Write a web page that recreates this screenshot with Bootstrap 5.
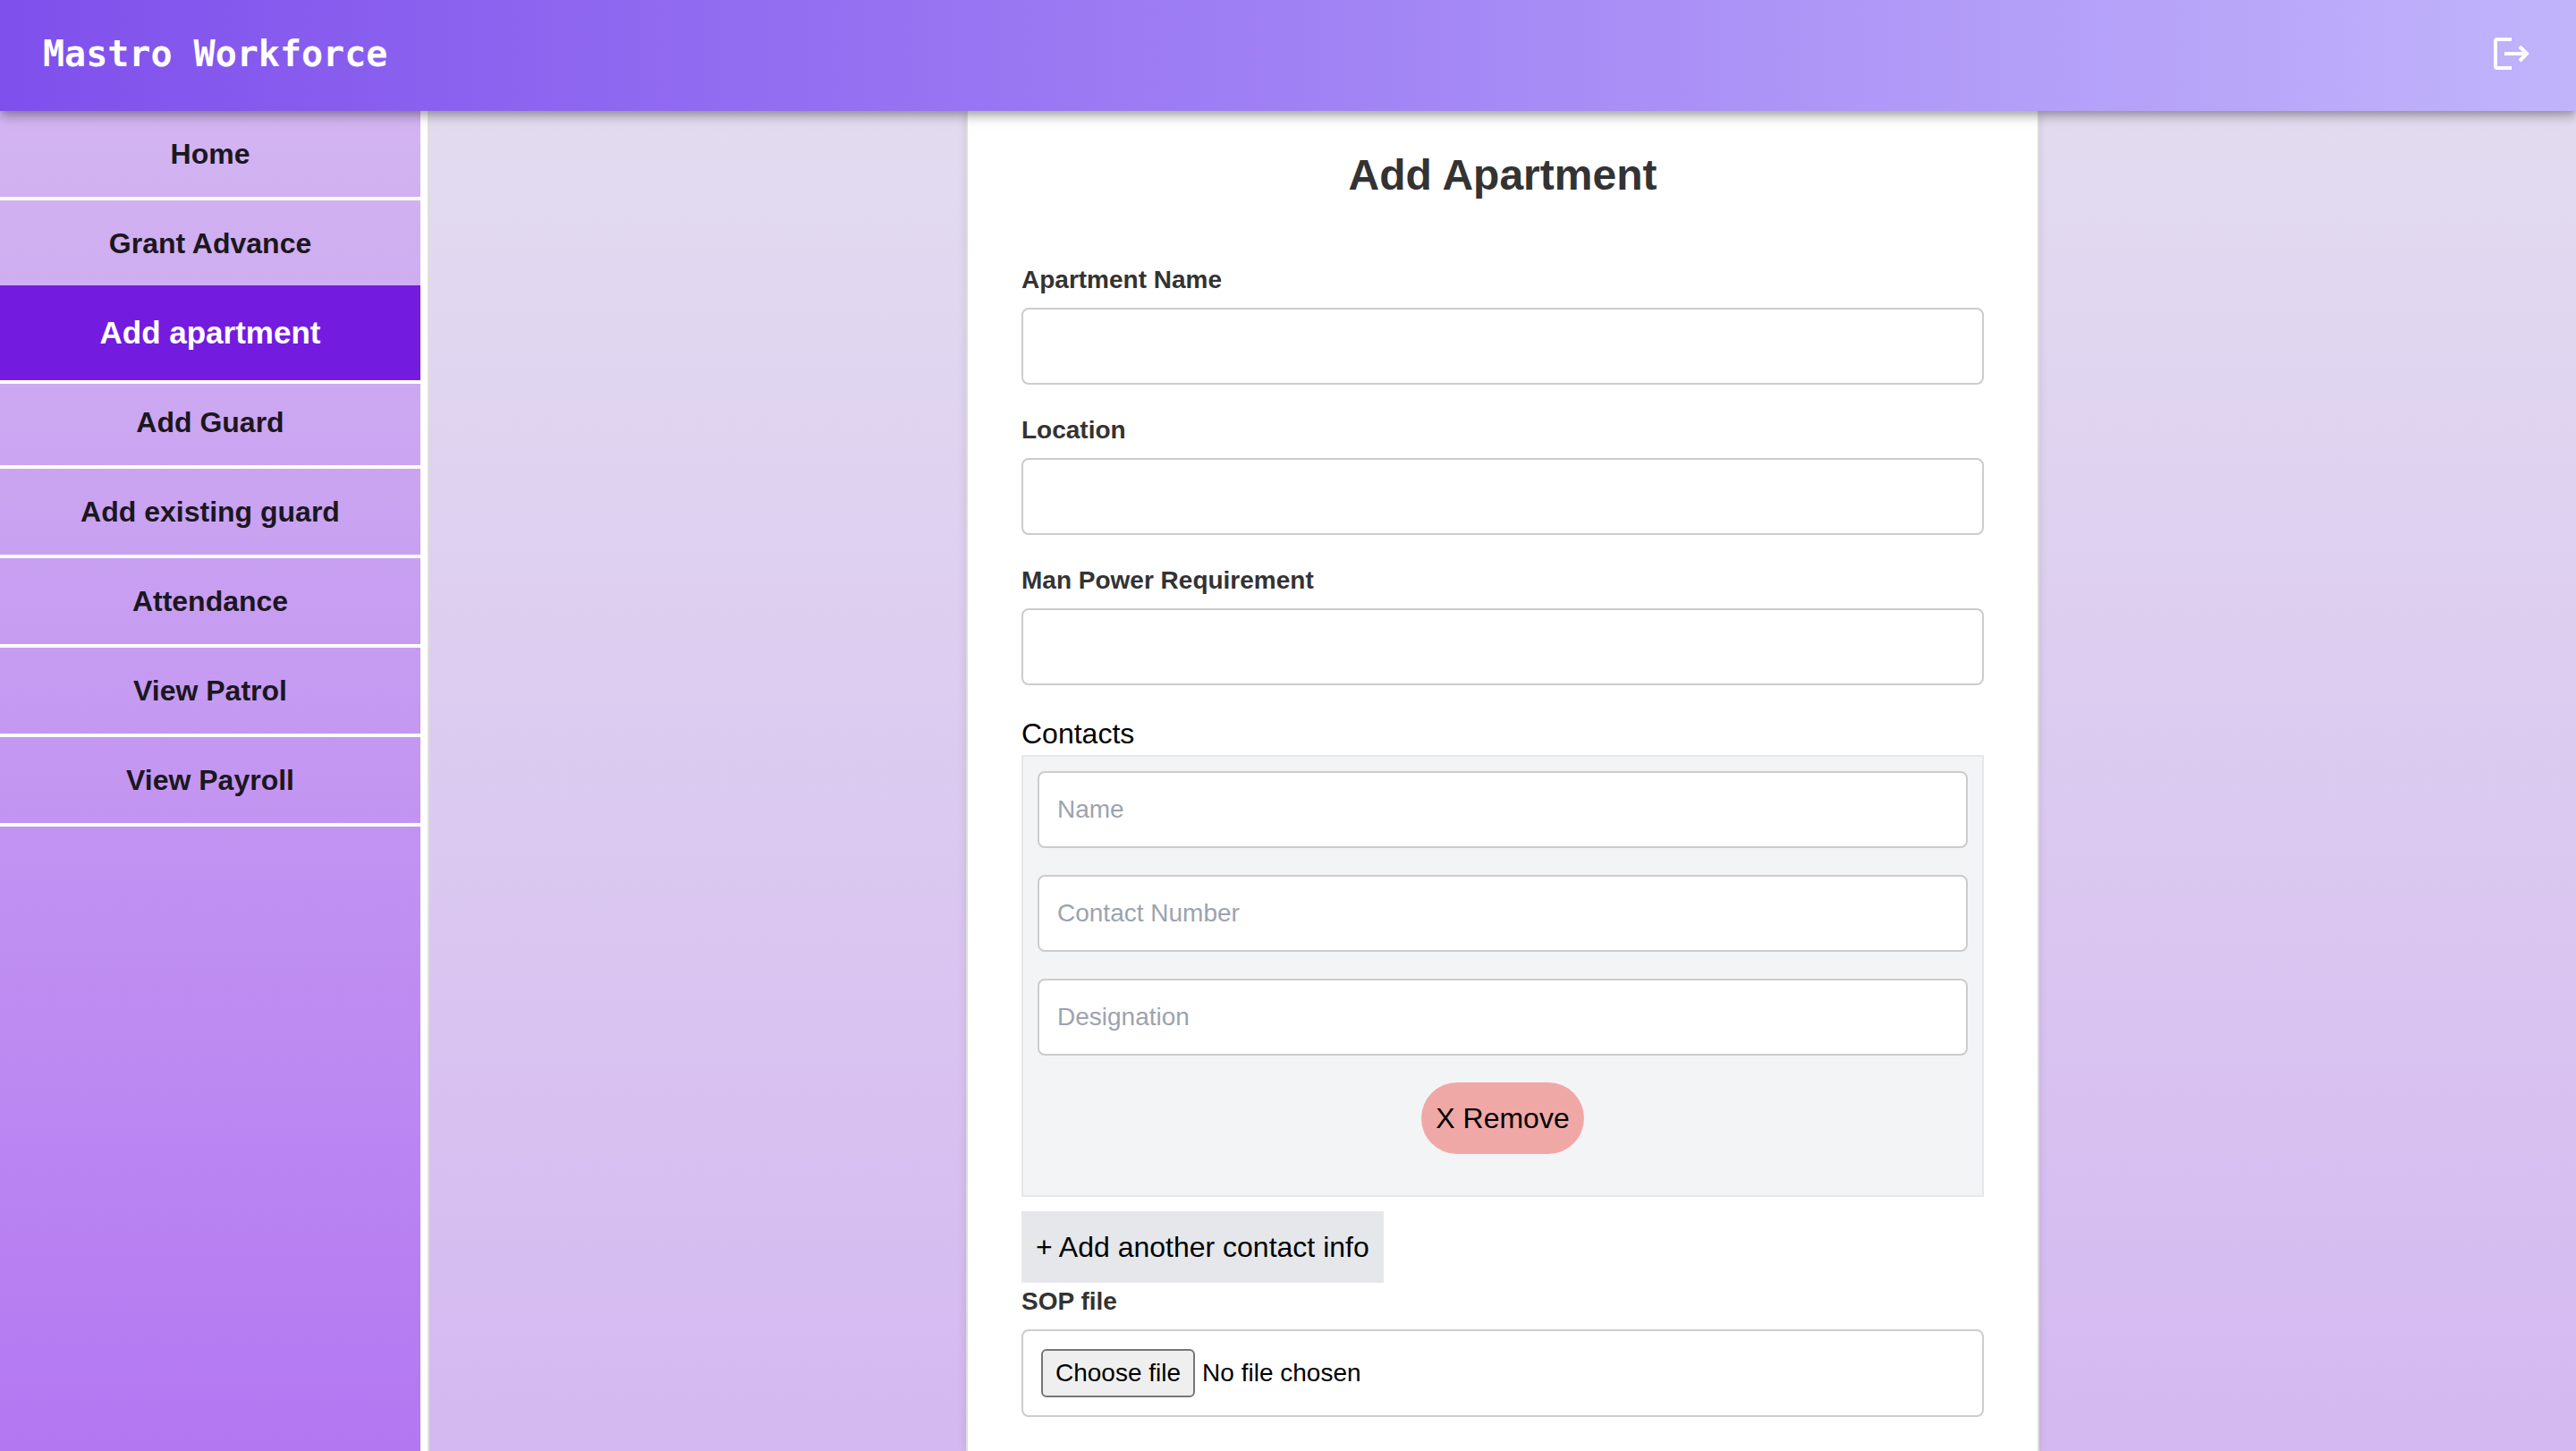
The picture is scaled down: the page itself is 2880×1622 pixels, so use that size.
<!DOCTYPE html>
<html lang="en">
<head>
<meta charset="utf-8">
<meta name="viewport" content="width=device-width, initial-scale=1">
<title>Mastro Workforce</title>
<link href="https://cdn.jsdelivr.net/npm/bootstrap@5.3.0/dist/css/bootstrap.min.css" rel="stylesheet">
<style>
  body {
    font-family: "Liberation Sans", Arial, Helvetica, sans-serif;
    font-size: 32px;
    line-height: 48px;
    color: #000;
    background: linear-gradient(180deg, #e4dff0, #d4b8f1);
  }
  .topbar {
    z-index: 10;
    padding: 36px 48px 40px;
    background: linear-gradient(90deg, #7f50ec, #a081f4 50%, #c1b4fb);
    box-shadow: 0 4px 8px -2px rgba(0,0,0,.2), 0 8px 10px 0 rgba(0,0,0,.14), 0 2px 20px 0 rgba(0,0,0,.12);
  }
  .brand-name {
    font: 700 40px/48px "DejaVu Sans Mono", monospace;
    color: #fff;
  }
  .logout-btn { width: 48px; height: 48px; }
  .side-col { border-right: 2px solid #e0e0e0; }
  .side-menu {
    border-right: 8px solid #fff;
    background: linear-gradient(180deg, #d3b5f1, #b377f2);
  }
  .side-link {
    padding: 24px 0;
    border-bottom: 4px solid #fff;
    font-weight: 700;
    color: #1b1720;
  }
  .side-link.active {
    z-index: 1;
    margin: -5px 0;
    padding: 26px 0;
    font-size: 35px;
    line-height: 54px;
    color: #fff;
    background: #731ce0;
  }
  .form-panel {
    padding: 36px 60px;
    border: solid #ddd;
    border-width: 0 2px;
    background: #fff;
    box-shadow: 0 0 10px rgba(0,0,0,.1);
  }
  .form-title {
    margin-bottom: 60px;
    font-size: 48px;
    line-height: 72px;
    font-weight: 700;
    color: #333;
  }
  .field-label {
    margin-bottom: 10px;
    font-size: 28px;
    line-height: 42px;
    font-weight: 700;
    color: #333;
  }
  .field-box {
    padding: 20px;
    border: 2px solid #ccc;
    border-radius: 8px;
    font-size: 28px;
    line-height: 42px;
    color: #000;
    background: #fff;
  }
  .field-box::placeholder { color: #9ca3af; }
  .field-gap { margin-bottom: 30px; }
  .contact-group {
    padding: 16px;
    border: 2px solid #e5e7eb;
    background: #f3f4f6;
  }
  .plain-btn {
    padding: 16px;
    border: 0;
    font-size: 32px;
    line-height: 48px;
    color: #000;
  }
  .remove-btn { background: #f0a8a6; }
  .add-btn { margin-top: 16px; background: #e5e7eb; }
  .file-btn {
    margin-right: 8px;
    padding: 4px 14px;
    border: 2px solid #767676;
    border-radius: 6px;
    background: #efefef;
  }
</style>
<script src="https://cdn.jsdelivr.net/npm/bootstrap@5.3.0/dist/js/bootstrap.bundle.min.js"></script>
</head>
<body class="d-flex flex-column min-vh-100">
  <header class="topbar navbar position-relative d-flex justify-content-between align-items-center">
    <a class="brand-name text-decoration-none" href="#">Mastro Workforce</a>
    <button class="logout-btn btn p-0 border-0 d-flex" type="button" aria-label="Log out">
      <svg width="48" height="48" viewBox="0 0 48 48" fill="none" stroke="#fff" stroke-width="4" aria-hidden="true">
        <path d="M24 8H8a2 2 0 0 0-2 2v28a2 2 0 0 0 2 2h16"/>
        <path d="M16 24h25M33 16l8 8-8 8"/>
      </svg>
    </button>
  </header>
  <div class="row g-0 flex-grow-1">
    <aside class="side-col col-2 d-flex">
      <nav class="side-menu flex-grow-1 d-flex flex-column text-center">
        <a class="side-link text-decoration-none" href="#">Home</a>
        <a class="side-link text-decoration-none" href="#">Grant Advance</a>
        <a class="side-link text-decoration-none position-relative active" href="#" aria-current="page">Add apartment</a>
        <a class="side-link text-decoration-none" href="#">Add Guard</a>
        <a class="side-link text-decoration-none" href="#">Add existing guard</a>
        <a class="side-link text-decoration-none" href="#">Attendance</a>
        <a class="side-link text-decoration-none" href="#">View Patrol</a>
        <a class="side-link text-decoration-none" href="#">View Payroll</a>
      </nav>
    </aside>
    <main class="col-10 d-flex justify-content-center">
      <form class="form-panel w-50">
        <h1 class="form-title text-center">Add Apartment</h1>
        <div class="field-gap">
          <label class="field-label d-block" for="apartment">Apartment Name</label>
          <input class="field-box form-control" type="text" id="apartment">
        </div>
        <div class="field-gap">
          <label class="field-label d-block" for="location">Location</label>
          <input class="field-box form-control" type="text" id="location">
        </div>
        <div class="field-gap">
          <label class="field-label d-block" for="manpower">Man Power Requirement</label>
          <input class="field-box form-control" type="text" id="manpower">
        </div>
        <div id="contacts-heading">Contacts</div>
        <div class="contact-group" role="group" aria-labelledby="contacts-heading">
          <input class="field-box field-gap form-control" type="text" placeholder="Name" aria-label="Name">
          <input class="field-box field-gap form-control" type="tel" placeholder="Contact Number" aria-label="Contact Number">
          <input class="field-box field-gap form-control" type="text" placeholder="Designation" aria-label="Designation">
          <button class="plain-btn remove-btn field-gap rounded-pill d-block mx-auto" type="button">X Remove</button>
        </div>
        <button class="plain-btn add-btn d-block" type="button">+ Add another contact info</button>
        <label class="field-label d-block" for="sop">SOP file</label>
        <div class="field-box position-relative d-flex align-items-center">
          <span class="file-btn">Choose file</span>
          <span>No file chosen</span>
          <input class="position-absolute top-0 start-0 w-100 h-100 opacity-0" type="file" id="sop">
        </div>
      </form>
    </main>
  </div>
</body>
</html>
